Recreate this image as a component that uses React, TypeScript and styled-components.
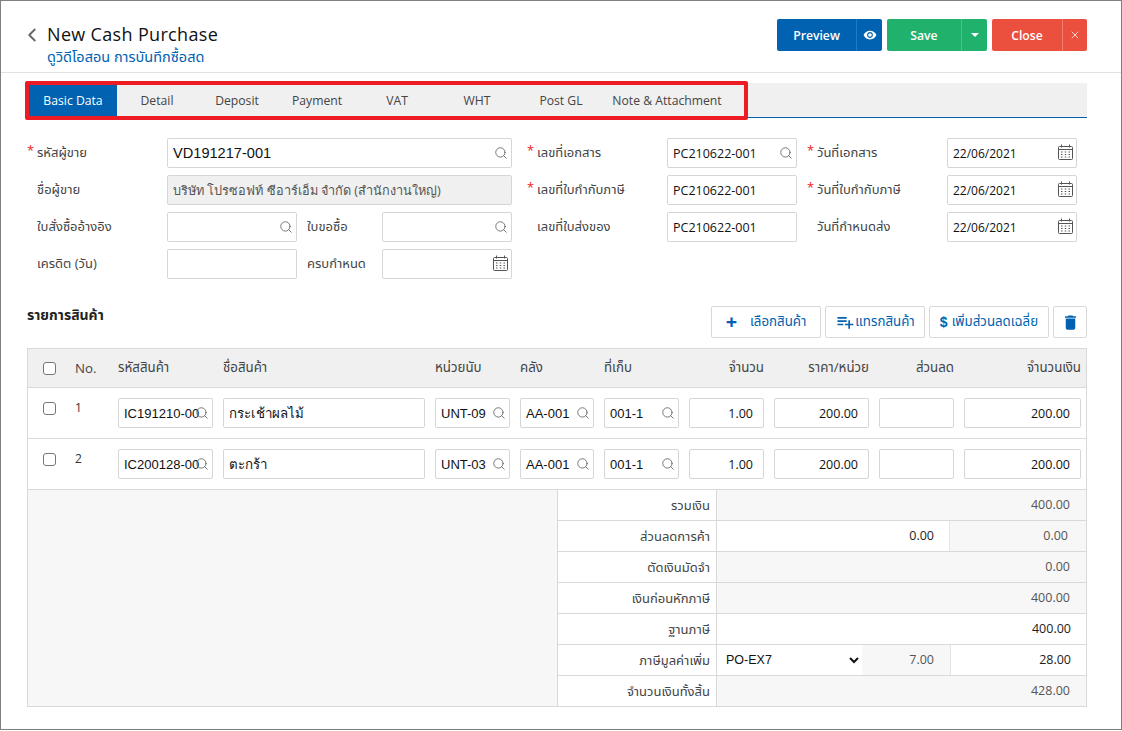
import React from "react";
import styled, { createGlobalStyle } from "styled-components";
import { ChevronLeft, Search, X } from "lucide-react";
import { MdDelete, MdPlaylistAdd, MdVisibility } from "react-icons/md";

const GlobalStyle = createGlobalStyle`
  html, body {
    margin: 0;
    padding: 0;
    background: #fff;
  }
  * {
    box-sizing: border-box;
  }
  body {
    font-family: "Open Sans", "Noto Sans", "Noto Sans Thai", Tahoma, sans-serif;
    font-size: 12px;
    color: #333;
  }
`;

const Window = styled.div`
  width: 1122px;
  height: 730px;
  border: 1px solid #808080;
  overflow: hidden;
`;

const Header = styled.header`
  height: 72px;
  border-bottom: 1px solid #e2e2e2;
  padding: 18px 34px 0 26px;
  display: flex;
  justify-content: space-between;
`;

const TitleWrap = styled.div`
  display: flex;
  gap: 4px;
`;

const BackIcon = styled(ChevronLeft)`
  width: 22px;
  height: 22px;
  margin-top: 5px;
  margin-left: -6px;
  color: #666;
`;

const Title = styled.h1`
  margin: 3px 0 0;
  font-size: 18px;
  line-height: 24px;
  font-weight: 400;
  color: #111;
  letter-spacing: 0.33px;
`;

const SubTitle = styled.div`
  font-size: 14.5px;
  line-height: 20px;
  margin-top: 1px;
  color: #0062b1;
`;

const Actions = styled.div`
  display: flex;
  gap: 5px;
`;

const ActionGroup = styled.div<{ $bg: string; $line: string; $w: number }>`
  width: ${(p) => p.$w}px;
  height: 32px;
  display: flex;
  background: ${(p) => p.$bg};
  border-radius: 2px;
  color: #fff;
  font-weight: 600;
  font-size: 12.2px;
  > button {
    border: 0;
    background: none;
    color: inherit;
    font: inherit;
    padding: 0;
    display: flex;
    align-items: center;
    justify-content: center;
  }
  > button:first-child {
    flex: 1;
  }
  > button:last-child {
    border-left: 1px solid ${(p) => p.$line};
  }
`;

const SideButton = styled.button<{ $w: number }>`
  width: ${(p) => p.$w}px;
`;

const Caret = styled.span`
  width: 0;
  height: 0;
  border-left: 4px solid transparent;
  border-right: 4px solid transparent;
  border-top: 4px solid #fff;
`;

const Body = styled.main`
  padding: 10px 34px 0 26px;
`;

const TabBar = styled.nav`
  position: relative;
  height: 35px;
  background: #f0f0f0;
  border-bottom: 1px solid #0062b1;
  display: flex;
  padding: 2px 0 0 2px;
`;

const Tab = styled.div<{ $active?: boolean; $w: number }>`
  width: ${(p) => p.$w}px;
  height: 31px;
  display: flex;
  align-items: center;
  justify-content: center;
  white-space: nowrap;
  font-size: 12.2px;
  background: ${(p) => (p.$active ? "#0062b1" : "transparent")};
  color: ${(p) => (p.$active ? "#fff" : "#444")};
  font-weight: ${(p) => (p.$active ? 500 : 400)};
`;

const Highlight = styled.div`
  position: absolute;
  left: -2px;
  top: -2px;
  width: 723px;
  height: 39px;
  border: 4px solid #ed1c24;
  border-radius: 2px;
  pointer-events: none;
`;

const FormGrid = styled.section`
  margin-top: 20px;
  display: grid;
  grid-template-columns: 140px 130px 85px 130px 15px 140px 130px 150px 130px;
  grid-auto-rows: 30px;
  row-gap: 7px;
  align-items: center;
`;

const Label = styled.label<{ $col?: number; $required?: boolean; $indent?: boolean }>`
  ${(p) => (p.$col ? `grid-column: ${p.$col};` : "")}
  position: relative;
  padding-left: 10px;
  margin-left: ${(p) => (p.$indent ? 10 : 0)}px;
  font-size: 13px;
  color: #444;
  white-space: nowrap;
  ${(p) =>
    p.$required
      ? `&::before {
          content: "*";
          position: absolute;
          left: 0;
          top: -2px;
          color: #ed1c24;
        }`
      : ""}
`;

const FieldWrap = styled.div<{ $span?: number }>`
  position: relative;
  height: 30px;
  min-width: 0;
  ${(p) => (p.$span ? `grid-column: span ${p.$span};` : "")}
`;

const TextField = styled.input<{ $arial?: boolean; $size?: number; $right?: boolean; $pr?: number }>`
  width: 100%;
  height: 100%;
  border: 1px solid #d6d6d6;
  border-radius: 2px;
  outline: 0;
  padding: 0 ${(p) => p.$pr ?? 5}px 0 5px;
  background: #fff;
  color: #111;
  font-family: ${(p) =>
    p.$arial ? '"Liberation Sans", Arial, sans-serif' : '"Open Sans", "Noto Sans", Tahoma, sans-serif'};
  font-size: ${(p) => p.$size ?? 12}px;
  text-align: ${(p) => (p.$right ? "right" : "left")};
  &:read-only {
    cursor: default;
  }
`;

const DisabledField = styled(TextField)`
  background: #f0f0f0;
  color: #555;
`;

const FieldIcon = styled.span<{ $top?: number }>`
  position: absolute;
  right: 4px;
  top: ${(p) => p.$top ?? 8}px;
  display: flex;
  color: #666;
`;

const ListHead = styled.div`
  margin-top: 27px;
  display: flex;
  justify-content: space-between;
  align-items: flex-start;
`;

const ListTitle = styled.h2`
  margin: 0;
  font-size: 14px;
  line-height: 18px;
  font-weight: 700;
  color: #222;
`;

const ToolBar = styled.div`
  display: flex;
  gap: 4px;
`;

const ToolButton = styled.button<{ $w: number; $gap?: number }>`
  width: ${(p) => p.$w}px;
  height: 32px;
  border: 1px solid #d9d9d9;
  border-radius: 2px;
  background: #fff;
  padding: 0;
  display: flex;
  align-items: center;
  justify-content: center;
  gap: ${(p) => p.$gap ?? 0}px;
  color: #0062b1;
  font-family: inherit;
  font-size: 13.3px;
`;

const PlusMark = styled.span`
  font-size: 20px;
  line-height: 20px;
  font-weight: 700;
  color: #0062b1;
`;

const DollarMark = styled.span`
  font-family: "Liberation Sans", Arial, sans-serif;
  font-size: 14px;
  font-weight: 700;
  color: #0062b1;
  margin-right: 4px;
`;

const Table = styled.section`
  margin-top: 10px;
  border: 1px solid #d9d9d9;
`;

const columns = "37px 33px 95px 202px 75px 74px 75px 75px 95px 75px 117px";

const HeadRow = styled.div`
  display: grid;
  grid-template-columns: ${columns};
  column-gap: 10px;
  padding-right: 5px;
  height: 39px;
  align-items: center;
  background: #f0f0f0;
  border-bottom: 1px solid #d9d9d9;
  font-size: 13.3px;
  color: #444;
`;

const HeadCell = styled.div<{ $right?: boolean }>`
  text-align: ${(p) => (p.$right ? "right" : "left")};
  white-space: nowrap;
`;

const ItemRow = styled.div`
  display: grid;
  grid-template-columns: ${columns};
  column-gap: 10px;
  padding: 10px 5px 0 0;
  height: 51px;
  align-items: start;
  border-bottom: 1px solid #d9d9d9;
`;

const Check = styled.input.attrs({ type: "checkbox" })<{ $top?: number }>`
  appearance: none;
  display: block;
  width: 13px;
  height: 13px;
  margin: ${(p) => p.$top ?? 0}px 0 0 15px;
  border: 1px solid #767676;
  border-radius: 3px;
  background: #fff;
`;

const RowNo = styled.div`
  padding-top: 1px;
  line-height: 18px;
  color: #333;
`;

const Summary = styled.section`
  display: flex;
`;

const SummaryBlank = styled.div`
  width: 530px;
  background: #f7f7f7;
  border-right: 1px solid #d9d9d9;
`;

const SummaryBody = styled.div`
  flex: 1;
`;

const SummaryRow = styled.div`
  height: 31px;
  display: flex;
  border-bottom: 1px solid #d9d9d9;
  &:last-child {
    border-bottom: 0;
    height: 30px;
  }
`;

const SummaryLabel = styled.div`
  width: 159px;
  padding-right: 6px;
  text-align: right;
  line-height: 31px;
  font-size: 13px;
  color: #444;
  border-right: 1px solid #d9d9d9;
`;

const SummaryCell = styled.div<{ $muted?: boolean; $w?: number; $pr?: number }>`
  ${(p) => (p.$w ? `width: ${p.$w}px;` : "flex: 1;")}
  background: ${(p) => (p.$muted ? "#f7f7f7" : "#fff")};
  color: ${(p) => (p.$muted ? "#555" : "#222")};
  padding-right: ${(p) => p.$pr ?? 15}px;
  text-align: right;
  line-height: 30px;
  font-size: 12.5px;
  & + & {
    border-left: 1px solid #e4e4e4;
  }
`;

const VatSelect = styled.select`
  width: 145px;
  border: 0;
  outline: 0;
  background: #fff;
  padding-left: 5px;
  font-family: "Liberation Sans", Arial, sans-serif;
  font-size: 12.5px;
  color: #111;
`;

const CalendarIcon = () => (
  <svg width="15" height="16" viewBox="0 0 15 16" fill="none" stroke="#555" strokeWidth="1">
    <rect x="0.5" y="2.5" width="14" height="13" rx="1" />
    <path d="M0.5 5.5h14M3.5 0.5v3M11.5 0.5v3" />
    <path
      d="M3 8h1.5M6.75 8h1.5M10.5 8h1.5M3 10.5h1.5M6.75 10.5h1.5M10.5 10.5h1.5M3 13h1.5M6.75 13h1.5M10.5 13h1.5"
      strokeWidth="1.2"
    />
  </svg>
);

const SearchField = ({ value = "", arial, size, span, pr }: { value?: string; arial?: boolean; size?: number; span?: number; pr?: number }) => (
  <FieldWrap $span={span}>
    <TextField readOnly value={value} $arial={arial} $size={size} $pr={pr} />
    <FieldIcon>
      <Search size={14} strokeWidth={1.5} />
    </FieldIcon>
  </FieldWrap>
);

const DateField = ({ value = "" }: { value?: string }) => (
  <FieldWrap>
    <TextField readOnly value={value} />
    <FieldIcon $top={6}>
      <CalendarIcon />
    </FieldIcon>
  </FieldWrap>
);

const tabs = [
  { name: "Basic Data", w: 88 },
  { name: "Detail", w: 80 },
  { name: "Deposit", w: 80 },
  { name: "Payment", w: 80 },
  { name: "VAT", w: 80 },
  { name: "WHT", w: 80 },
  { name: "Post GL", w: 88 },
  { name: "Note & Attachment", w: 124 },
];

const items = [
  { no: 1, code: "IC191210-001", name: "กระเช้าผลไม้", unit: "UNT-09" },
  { no: 2, code: "IC200128-001", name: "ตะกร้า", unit: "UNT-03" },
];

export default function App() {
  return (
    <Window>
      <GlobalStyle />
      <Header>
        <TitleWrap>
          <BackIcon strokeWidth={2} />
          <div>
            <Title>New Cash Purchase</Title>
            <SubTitle>ดูวิดีโอสอน การบันทึกซื้อสด</SubTitle>
          </div>
        </TitleWrap>
        <Actions>
          <ActionGroup $bg="#0062b1" $line="#1a7cd0" $w={105}>
            <button type="button">Preview</button>
            <SideButton type="button" $w={26}>
              <MdVisibility size={14} />
            </SideButton>
          </ActionGroup>
          <ActionGroup $bg="#20b26c" $line="#45c688" $w={100}>
            <button type="button">Save</button>
            <SideButton type="button" $w={26}>
              <Caret />
            </SideButton>
          </ActionGroup>
          <ActionGroup $bg="#eb4f3e" $line="#f57c6e" $w={95}>
            <button type="button">Close</button>
            <SideButton type="button" $w={25}>
              <X size={12} strokeWidth={1.5} />
            </SideButton>
          </ActionGroup>
        </Actions>
      </Header>
      <Body>
        <TabBar>
          {tabs.map((tab, i) => (
            <Tab key={tab.name} $active={i === 0} $w={tab.w}>
              {tab.name}
            </Tab>
          ))}
          <Highlight />
        </TabBar>

        <FormGrid>
          <Label $required>รหัสผู้ขาย</Label>
          <SearchField value="VD191217-001" arial size={14.6} span={3} />
          <Label $col={6} $required>เลขที่เอกสาร</Label>
          <SearchField value="PC210622-001" size={12.5} />
          <Label $required $indent>วันที่เอกสาร</Label>
          <DateField value="22/06/2021" />

          <Label>ชื่อผู้ขาย</Label>
          <FieldWrap $span={3}>
            <DisabledField readOnly value="บริษัท โปรซอฟท์ ซีอาร์เอ็ม จำกัด (สำนักงานใหญ่)" $size={12.7} />
          </FieldWrap>
          <Label $col={6} $required>เลขที่ใบกำกับภาษี</Label>
          <FieldWrap>
            <TextField readOnly value="PC210622-001" $size={12.5} />
          </FieldWrap>
          <Label $required $indent>วันที่ใบกำกับภาษี</Label>
          <DateField value="22/06/2021" />

          <Label>ใบสั่งซื้ออ้างอิง</Label>
          <SearchField />
          <Label>ใบขอซื้อ</Label>
          <SearchField />
          <Label $col={6}>เลขที่ใบส่งของ</Label>
          <FieldWrap>
            <TextField readOnly value="PC210622-001" $size={12.5} />
          </FieldWrap>
          <Label $indent>วันที่กำหนดส่ง</Label>
          <DateField value="22/06/2021" />

          <Label>เครดิต (วัน)</Label>
          <FieldWrap>
            <TextField readOnly value="" />
          </FieldWrap>
          <Label>ครบกำหนด</Label>
          <DateField />
        </FormGrid>

        <ListHead>
          <ListTitle>รายการสินค้า</ListTitle>
          <ToolBar>
            <ToolButton type="button" $w={110} $gap={13}>
              <PlusMark>+</PlusMark>
              เลือกสินค้า
            </ToolButton>
            <ToolButton type="button" $w={100}>
              <MdPlaylistAdd size={20} />
              แทรกสินค้า
            </ToolButton>
            <ToolButton type="button" $w={120}>
              <DollarMark>$</DollarMark>
              เพิ่มส่วนลดเฉลี่ย
            </ToolButton>
            <ToolButton type="button" $w={34}>
              <MdDelete size={19} />
            </ToolButton>
          </ToolBar>
        </ListHead>

        <Table>
          <HeadRow>
            <Check />
            <HeadCell>No.</HeadCell>
            <HeadCell>รหัสสินค้า</HeadCell>
            <HeadCell>ชื่อสินค้า</HeadCell>
            <HeadCell>หน่วยนับ</HeadCell>
            <HeadCell>คลัง</HeadCell>
            <HeadCell>ที่เก็บ</HeadCell>
            <HeadCell $right>จำนวน</HeadCell>
            <HeadCell $right>ราคา/หน่วย</HeadCell>
            <HeadCell $right>ส่วนลด</HeadCell>
            <HeadCell $right>จำนวนเงิน</HeadCell>
          </HeadRow>
          {items.map((item) => (
            <ItemRow key={item.no}>
              <Check $top={4} />
              <RowNo>{item.no}</RowNo>
              <SearchField value={item.code} arial size={13} pr={12} />
              <FieldWrap>
                <TextField readOnly value={item.name} $size={13.3} />
              </FieldWrap>
              <SearchField value={item.unit} arial size={13} pr={20} />
              <SearchField value="AA-001" arial size={13} pr={20} />
              <SearchField value="001-1" arial size={13} pr={20} />
              <FieldWrap>
                <TextField readOnly value="1.00" $right $pr={10} $size={12.5} />
              </FieldWrap>
              <FieldWrap>
                <TextField readOnly value="200.00" $right $pr={10} $size={12.5} />
              </FieldWrap>
              <FieldWrap>
                <TextField readOnly value="" $right />
              </FieldWrap>
              <FieldWrap>
                <TextField readOnly value="200.00" $right $pr={10} $size={12.5} />
              </FieldWrap>
            </ItemRow>
          ))}
          <Summary>
            <SummaryBlank />
            <SummaryBody>
              <SummaryRow>
                <SummaryLabel>รวมเงิน</SummaryLabel>
                <SummaryCell $muted $pr={16}>400.00</SummaryCell>
              </SummaryRow>
              <SummaryRow>
                <SummaryLabel>ส่วนลดการค้า</SummaryLabel>
                <SummaryCell>0.00</SummaryCell>
                <SummaryCell $muted $w={137} $pr={18}>0.00</SummaryCell>
              </SummaryRow>
              <SummaryRow>
                <SummaryLabel>ตัดเงินมัดจำ</SummaryLabel>
                <SummaryCell $muted $pr={16}>0.00</SummaryCell>
              </SummaryRow>
              <SummaryRow>
                <SummaryLabel>เงินก่อนหักภาษี</SummaryLabel>
                <SummaryCell $muted $pr={16}>400.00</SummaryCell>
              </SummaryRow>
              <SummaryRow>
                <SummaryLabel>ฐานภาษี</SummaryLabel>
                <SummaryCell>400.00</SummaryCell>
              </SummaryRow>
              <SummaryRow>
                <SummaryLabel>ภาษีมูลค่าเพิ่ม</SummaryLabel>
                <VatSelect defaultValue="PO-EX7">
                  <option>PO-EX7</option>
                </VatSelect>
                <SummaryCell $muted $w={88} $pr={16}>7.00</SummaryCell>
                <SummaryCell>28.00</SummaryCell>
              </SummaryRow>
              <SummaryRow>
                <SummaryLabel>จำนวนเงินทั้งสิ้น</SummaryLabel>
                <SummaryCell $muted $pr={16}>428.00</SummaryCell>
              </SummaryRow>
            </SummaryBody>
          </Summary>
        </Table>
      </Body>
    </Window>
  );
}
